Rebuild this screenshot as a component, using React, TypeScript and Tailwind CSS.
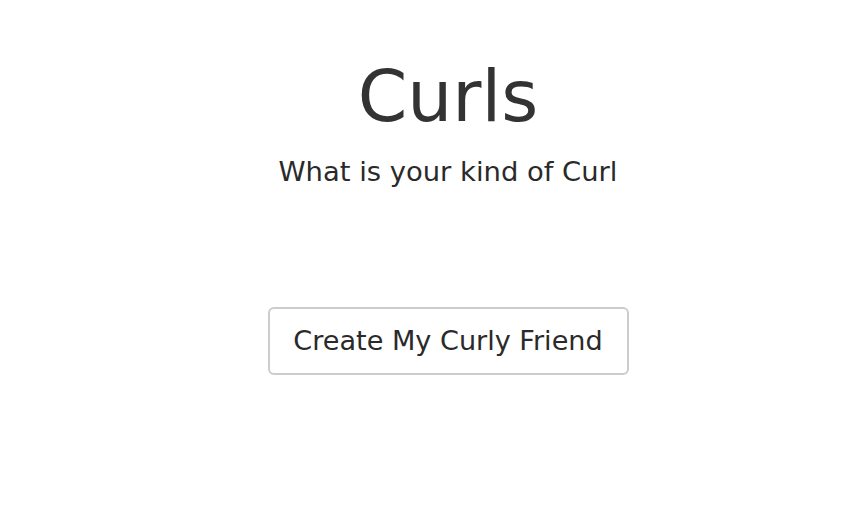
import React from "react";

function App() {
  return (
    <div
      className="min-h-screen bg-white text-[#333333] flex flex-col items-center pl-[54px]"
      style={{ fontFamily: '"DejaVu Sans", "Liberation Sans", sans-serif' }}
    >
      <h1 className="mt-[52px] text-[71px] leading-[90px]">Curls</h1>
      <p className="mt-[12px] text-[27.4px] leading-[36px] text-[#2a2a2a]">What is your kind of Curl</p>
      <button className="mt-[117px] w-[361px] h-[68px] rounded-[6px] border-2 border-[#cccccc] bg-white text-[27.1px] text-[#2a2a2a]">
        Create My Curly Friend
      </button>
    </div>
  );
}

export default App;
